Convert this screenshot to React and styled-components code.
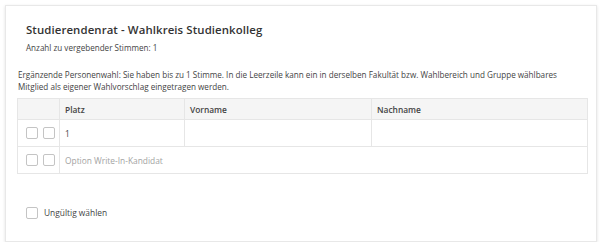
import React from "react";
import styled, { createGlobalStyle } from "styled-components";

const GlobalStyle = createGlobalStyle`
  body {
    margin: 0;
    background: #fff;
    font-family: "Open Sans", "Liberation Sans", sans-serif;
    color: #444;
  }
`;

const Card = styled.div`
  margin: 5px 0 0 5px;
  width: 590px;
  height: 235px;
  border: 1px solid #e8e8e8;
  box-shadow: 0 1px 3px rgba(0, 0, 0, 0.12);
  background: #fff;
`;

const Head = styled.div`
  padding: 16px 20px 0;
`;

const Title = styled.h2`
  margin: 0;
  font-size: 11.4px;
  font-weight: 600;
  line-height: 16px;
  color: #333;
  letter-spacing: 0.1px;
`;

const Sub = styled.div`
  margin-top: 4px;
  font-size: 8.1px;
  line-height: 12px;
  color: #444;
`;

const Body = styled.div`
  padding: 15px 10px 0 11px;
`;

const Info = styled.p`
  margin: 0 0 0 1px;
  font-size: 8.15px;
  line-height: 12px;
  color: #444;
`;

const Table = styled.table`
  margin-top: 5px;
  width: 571px;
  table-layout: fixed;
  border-collapse: collapse;
  border: 1px solid #e6e6e6;
  font-size: 8.4px;
`;

const Th = styled.th`
  height: 20px;
  padding: 0 0 0 5px;
  text-align: left;
  font-weight: 600;
  color: #444;
  background: #f5f5f5;
  border: 1px solid #e6e6e6;
`;

const Td = styled.td`
  height: 26px;
  padding: 0 0 0 5px;
  border: 1px solid #e6e6e6;
  color: ${(p) => (p.$muted ? "#a3a3a3" : "#444")};
`;

const Boxes = styled.div`
  display: flex;
  gap: 5px;
  padding-left: 3px;
`;

const Box = styled.span`
  display: inline-block;
  flex: none;
  width: 10px;
  height: 10px;
  border: 1px solid #c4c4c4;
  border-radius: 2px;
  background: #fff;
`;

const Invalid = styled.label`
  display: flex;
  align-items: center;
  gap: 6px;
  margin: 33px 0 0 9px;
  font-size: 8.4px;
  line-height: 12px;
  color: #444;
`;

export default function App() {
  return (
    <>
      <GlobalStyle />
      <Card>
        <Head>
          <Title>Studierendenrat - Wahlkreis Studienkolleg</Title>
          <Sub>Anzahl zu vergebender Stimmen: 1</Sub>
        </Head>
        <Body>
          <Info>
            Ergänzende Personenwahl: Sie haben bis zu 1 Stimme. In die Leerzeile kann ein in derselben
            Fakultät bzw. Wahlbereich und Gruppe wählbares Mitglied als eigener Wahlvorschlag
            eingetragen werden.
          </Info>
          <Table>
            <colgroup>
              <col style={{ width: 42 }} />
              <col style={{ width: 125 }} />
              <col style={{ width: 187 }} />
              <col />
            </colgroup>
            <thead>
              <tr>
                <Th />
                <Th>Platz</Th>
                <Th>Vorname</Th>
                <Th>Nachname</Th>
              </tr>
            </thead>
            <tbody>
              <tr>
                <Td>
                  <Boxes>
                    <Box />
                    <Box />
                  </Boxes>
                </Td>
                <Td>1</Td>
                <Td />
                <Td />
              </tr>
              <tr>
                <Td>
                  <Boxes>
                    <Box />
                    <Box />
                  </Boxes>
                </Td>
                <Td colSpan={3} $muted>
                  Option Write-In-Kandidat
                </Td>
              </tr>
            </tbody>
          </Table>
          <Invalid>
            <Box />
            Ungültig wählen
          </Invalid>
        </Body>
      </Card>
    </>
  );
}
